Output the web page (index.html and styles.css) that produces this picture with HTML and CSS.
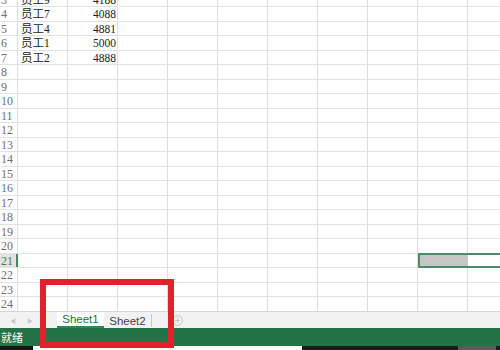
FILE: index.html
```html
<!DOCTYPE html>
<html lang="zh-CN">
<head>
  <meta charset="UTF-8" />
  <title>Sheet1</title>
  <link rel="stylesheet" href="styles.css">
</head>
<body>
  <div id="app">
    <div class="sheet">
      <div class="rows">
        <div class="row"><div class="rh">3</div><div class="c name">员工9</div><div class="c num">4188</div></div>
        <div class="row"><div class="rh">4</div><div class="c name">员工7</div><div class="c num">4088</div></div>
        <div class="row"><div class="rh">5</div><div class="c name">员工4</div><div class="c num">4881</div></div>
        <div class="row"><div class="rh">6</div><div class="c name">员工1</div><div class="c num">5000</div></div>
        <div class="row"><div class="rh">7</div><div class="c name">员工2</div><div class="c num">4888</div></div>
        <div class="row"><div class="rh">8</div></div>
        <div class="row"><div class="rh">9</div></div>
        <div class="row"><div class="rh">10</div></div>
        <div class="row"><div class="rh">11</div></div>
        <div class="row"><div class="rh">12</div></div>
        <div class="row"><div class="rh">13</div></div>
        <div class="row"><div class="rh">14</div></div>
        <div class="row"><div class="rh">15</div></div>
        <div class="row"><div class="rh">16</div></div>
        <div class="row"><div class="rh">17</div></div>
        <div class="row"><div class="rh">18</div></div>
        <div class="row"><div class="rh">19</div></div>
        <div class="row"><div class="rh">20</div></div>
        <div class="row"><div class="rh active">21</div><div class="sel"><div class="sel-fill"></div></div></div>
        <div class="row"><div class="rh">22</div></div>
        <div class="row"><div class="rh">23</div></div>
        <div class="row"><div class="rh">24</div></div>
      </div>
    </div>

    <div class="tabbar">
      <div class="nav">
        <span class="arrow">&#9664;</span>
        <span class="arrow">&#9654;</span>
      </div>
      <div class="tab current">Sheet1</div>
      <div class="tab">Sheet2</div>
      <div class="add">
        <svg width="11" height="11" viewBox="0 0 11 11">
          <circle cx="5.5" cy="5.5" r="4.8" fill="none" stroke="#c4c4c4" stroke-width="1"/>
          <path d="M5.5 3v5M3 5.5h5" stroke="#c4c4c4" stroke-width="1"/>
        </svg>
      </div>
    </div>

    <div class="status">就绪</div>

    <div class="taskbar">
      <div class="tb-black"></div>
      <div class="tb-white"></div>
      <div class="tb-dark"></div>
      <div class="tb-gray"></div>
      <div class="tb-dark2"></div>
    </div>

    <!-- red annotation box over the sheet tabs -->
    <div class="mark"></div>
  </div>
</body>
</html>
```

FILE: styles.css
```css
body {
  margin: 0;
  background: #ffffff;
  font-family: "Liberation Serif", "Noto Sans CJK SC", serif;
}
#app {
  position: relative;
  width: 500px;
  height: 350px;
  overflow: hidden;
}
.sheet {
  height: 311px;
  overflow: hidden;
  background-image: repeating-linear-gradient(90deg, transparent 0 49px, #e0e0e0 49px 50px);
  background-position: 18px 0;
}
.rows {
  margin-top: -7.2px;
}
.row {
  display: flex;
  height: 14.5px;
  box-sizing: border-box;
  border-bottom: 1px solid #e2e2e2;
}
.rh {
  width: 18px;
  flex: none;
  box-sizing: border-box;
  border-right: 1px solid #e0e0e0;
  background: #ffffff;
  color: #707070;
  font-size: 12px;
  line-height: 14px;
  padding-left: 1px;
}
.rh.active {
  background: #e2e2e2;
  color: #4c7a5e;
  border-right: 2px solid #3f8a5f;
}
.c {
  width: 50px;
  flex: none;
  box-sizing: border-box;
  font-size: 11.5px;
  line-height: 15px;
  color: #222222;
}
.name {
  padding-left: 3px;
}
.num {
  text-align: right;
  padding-right: 2px;
}
.sel {
  margin-left: 400px;
  margin-top: -1px;
  width: 90px;
  height: 15.5px;
  flex: none;
  box-sizing: border-box;
  border: 2px solid #4d8a68;
}
.sel-fill {
  width: 48px;
  height: 100%;
  background: #c6c6c6;
}
.tabbar {
  display: flex;
  align-items: stretch;
  height: 16px;
  background: #f2f2f2;
  border-top: 1px solid #d6d6d6;
  font-family: "Liberation Sans", "Noto Sans CJK SC", sans-serif;
  font-size: 11.5px;
}
.nav {
  width: 57px;
  display: flex;
  align-items: center;
  gap: 11px;
  padding-left: 10px;
  box-sizing: border-box;
}
.arrow {
  color: #c8c8c8;
  font-size: 6px;
}
.tab {
  width: 48px;
  box-sizing: border-box;
  display: flex;
  align-items: center;
  justify-content: center;
  color: #444444;
  border-right: 1px solid #c8c8c8;
  margin: 2px 0 1px;
}
.tab.current {
  width: 47px;
  margin: 0;
  background: #ffffff;
  color: #217346;
  border-right: none;
  border-bottom: 2px solid #2c8a54;
}
.add {
  display: flex;
  align-items: center;
  margin-left: 20px;
}
.status {
  height: 18px;
  background: #227447;
  color: #ffffff;
  font-family: "Noto Sans CJK SC", sans-serif;
  font-size: 11px;
  line-height: 18px;
  padding-left: 1px;
}
.taskbar {
  display: flex;
  height: 5px;
}
.tb-black { width: 33px; background: #141414; }
.tb-white { width: 269px; background: #ffffff; }
.tb-dark { width: 156px; background: #1c1c1c; }
.tb-gray { width: 38px; background: #5a5a5a; }
.tb-dark2 { flex: 1; background: #1c1c1c; }
.mark {
  position: absolute;
  left: 40px;
  top: 279px;
  width: 134px;
  height: 69px;
  box-sizing: border-box;
  border: 6px solid #e3202b;
}
```
